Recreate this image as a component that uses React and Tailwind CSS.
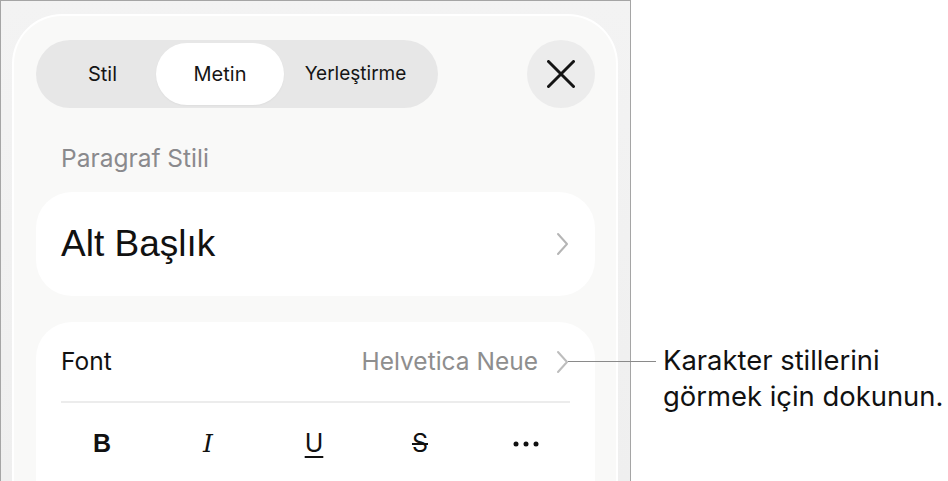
import React from "react";

const SF = { fontFamily: "Inter, 'Noto Sans', sans-serif" };

function Chevron({ className = "" }) {
  return (
    <svg width="13" height="24" viewBox="0 0 13 24" className={className} fill="none">
      <path d="M2 2 L11 12 L2 22" stroke="currentColor" strokeWidth="2" strokeLinecap="round" strokeLinejoin="round" />
    </svg>
  );
}

export default function App() {
  return (
    <div className="relative w-[948px] h-[481px] bg-white flex overflow-hidden" style={SF}>
      <div className="w-[631px] h-[481px] border-l border-t border-r border-[#a5a5a5] bg-gradient-to-b from-[#f3f3f3] to-[#efefef] pl-[11px] pr-[12px] pt-[13px] flex">
        <div className="flex-1 rounded-t-[50px] bg-[#f9f9f8] border-2 border-b-0 border-white pl-[22px] pr-[21px] pt-[24px] flex flex-col overflow-hidden">
          <div className="shrink-0 flex items-center justify-between">
            <div className="w-[402px] h-[68px] rounded-full bg-[#e7e7e7] p-[3px] flex items-stretch text-[20px] text-[#151515]">
              <div className="w-[117px] pl-[10px] flex items-center justify-center">Stil</div>
              <div className="w-[128px] rounded-full bg-white flex items-center justify-center shadow-[0_1px_2px_rgba(0,0,0,0.04)]">Metin</div>
              <div className="w-[151px] pr-[8px] flex items-center justify-center text-[19px]">Yerleştirme</div>
            </div>
            <div className="w-[68px] h-[68px] rounded-full bg-[#ececec] flex items-center justify-center">
              <svg width="28" height="28" viewBox="0 0 28 28">
                <path d="M1.5 1.5 L26.5 26.5 M26.5 1.5 L1.5 26.5" stroke="#141414" strokeWidth="3" strokeLinecap="round" />
              </svg>
            </div>
          </div>

          <div className="shrink-0 mt-[36px] pl-[25px] h-[28px] leading-[28px] text-[24.5px] text-[#8a8a8d]">Paragraf Stili</div>

          <div className="shrink-0 mt-[20px] h-[104px] rounded-[36px] bg-white flex items-center justify-between pl-[25px] pr-[26px]">
            <span className="text-[37px] text-[#111]" style={{ fontFamily: "'Liberation Sans', Arial, sans-serif" }}>Alt Başlık</span>
            <Chevron className="text-[#b5b5b5]" />
          </div>

          <div className="shrink-0 mt-[26px] h-[200px] rounded-t-[36px] bg-white flex flex-col">
            <div className="shrink-0 h-[79px] flex items-center justify-between pl-[25px] pr-[26px] text-[24.5px]">
              <span className="text-[#111]">Font</span>
              <div className="flex items-center gap-[18px]">
                <span className="text-[#8e8e8e]">Helvetica Neue</span>
                <Chevron className="text-[#bdbdbd]" />
              </div>
            </div>
            <div className="shrink-0 mx-[25px] h-[2px] bg-[#ececec]" />
            <div className="shrink-0 grid grid-cols-5 w-[530px] ml-[13px] h-[82px] items-center text-[25px] text-[#111]">
              <span className="text-center font-bold" style={{ fontFamily: "'Liberation Sans', Arial, sans-serif" }}>B</span>
              <span className="text-center italic" style={{ fontFamily: "'DejaVu Serif', serif" }}>I</span>
              <span className="text-center underline underline-offset-[4px] decoration-[2px]">U</span>
              <span className="text-center line-through decoration-[2px]">S</span>
              <span className="flex justify-center">
                <svg width="26" height="6" viewBox="0 0 26 6">
                  <circle cx="3" cy="3" r="2.5" fill="#111" />
                  <circle cx="13" cy="3" r="2.5" fill="#111" />
                  <circle cx="23" cy="3" r="2.5" fill="#111" />
                </svg>
              </span>
            </div>
          </div>
        </div>
      </div>

      <div className="absolute left-[568px] top-[361px] w-[88px] h-[1px] bg-[#8a8a8a]" />
      <div className="absolute left-[663px] top-[342px] text-[27.4px] leading-[36px] text-[#111]">
        <div>Karakter stillerini</div>
        <div>görmek için dokunun.</div>
      </div>
    </div>
  );
}
